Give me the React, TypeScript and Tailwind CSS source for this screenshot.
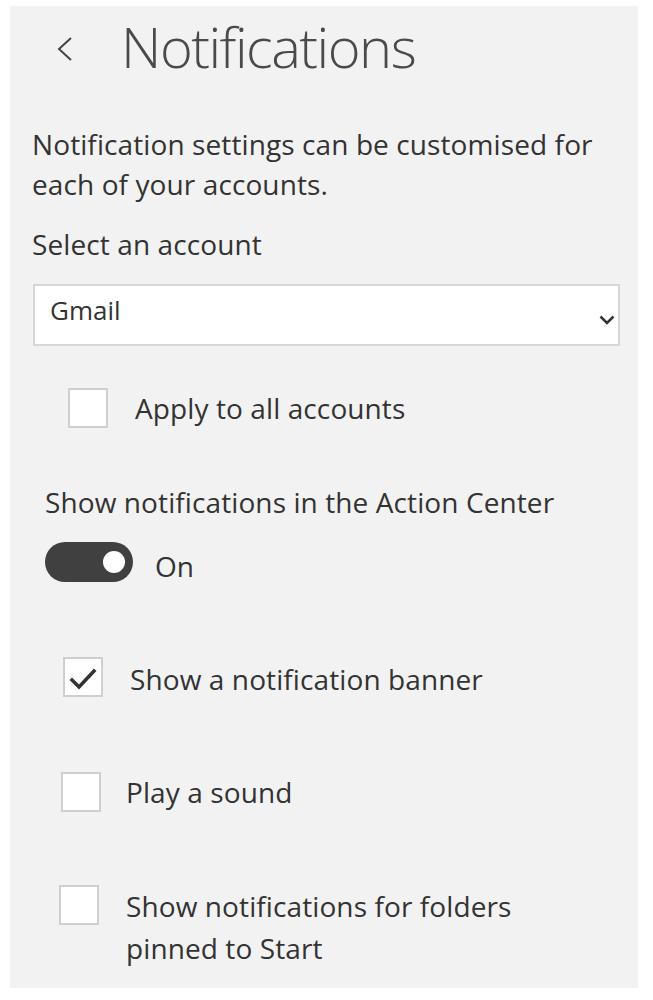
import React from "react";

const font = { fontFamily: '"Open Sans", "Noto Sans", sans-serif' };

const Box = ({ checked }: { checked?: boolean }) => (
  <div className="w-[40px] h-[40px] shrink-0 bg-white border-2 border-[#cfcfcf] flex items-center justify-center">
    {checked && (
      <svg width="36" height="36" viewBox="0 0 36 36" fill="none">
        <path d="M7 21 L14 28 L29 12" stroke="#333" strokeWidth="3.5" strokeLinecap="square" />
      </svg>
    )}
  </div>
);

export default function App() {
  return (
    <div className="min-h-screen bg-white pt-[6px] pl-[10px] text-[#333]" style={font}>
      <div className="bg-[#f2f2f2] w-[628px] h-[982px] pt-[8px] pl-[23px]">
        {/* header */}
        <div className="flex items-center h-[64px]">
          <svg className="ml-[24px] mt-[6px]" width="16" height="24" viewBox="0 0 16 24" fill="none">
            <path d="M14 1 L2 12 L14 23" stroke="#444" strokeWidth="2" />
          </svg>
          <h1 className="ml-[48px] text-[56px] leading-[64px] font-extralight text-[#4a4a4a] tracking-[-1.5px]">
            Notifications
          </h1>
        </div>

        <p className="mt-[46px] -ml-[1px] text-[28px] leading-[40px] tracking-[0.1px]">
          Notification settings can be customised for
          <br />
          each of your accounts.
        </p>

        <p className="mt-[20px] -ml-[1px] text-[28px] leading-[40px] tracking-[0.1px]">Select an account</p>

        <div className="mt-[20px] w-[587px] h-[62px] bg-white border-2 border-[#d6d6d6] flex items-start justify-between pl-[15px] pr-[3px]">
          <span className="mt-[4px] text-[26px] leading-[40px]">Gmail</span>
          <svg className="mt-[29px]" width="16" height="10" viewBox="0 0 16 10" fill="none">
            <path d="M1.5 1.5 L8 8 L14.5 1.5" stroke="#333" strokeWidth="2.5" />
          </svg>
        </div>

        <div className="mt-[42px] ml-[35px] flex items-start gap-[27px]">
          <Box />
          <span className="text-[28px] leading-[40px] tracking-[0.1px]">Apply to all accounts</span>
        </div>

        <p className="mt-[54px] ml-[12px] text-[28px] leading-[40px] tracking-[0.1px]">
          Show notifications in the Action Center
        </p>

        <div className="mt-[20px] ml-[12px] flex items-start gap-[22px]">
          <div className="w-[88px] h-[40px] rounded-full bg-[#404040] flex items-center justify-end pr-[8px]">
            <div className="w-[22px] h-[22px] rounded-full bg-white" />
          </div>
          <span className="pt-[4px] text-[28px] leading-[40px]">On</span>
        </div>

        <div className="mt-[71px] ml-[30px] flex items-start gap-[27px]">
          <Box checked />
          <span className="pt-[2px] text-[28px] leading-[40px] tracking-[0.1px]">Show a notification banner</span>
        </div>

        <div className="mt-[73px] ml-[28px] flex items-start gap-[25px]">
          <Box />
          <span className="text-[28px] leading-[40px] tracking-[0.1px]">Play a sound</span>
        </div>

        <div className="mt-[73px] ml-[26px] flex items-start gap-[27px]">
          <Box />
          <span className="text-[28px] leading-[42px] tracking-[0.1px]">
            Show notifications for folders
            <br />
            pinned to Start
          </span>
        </div>
      </div>
    </div>
  );
}
